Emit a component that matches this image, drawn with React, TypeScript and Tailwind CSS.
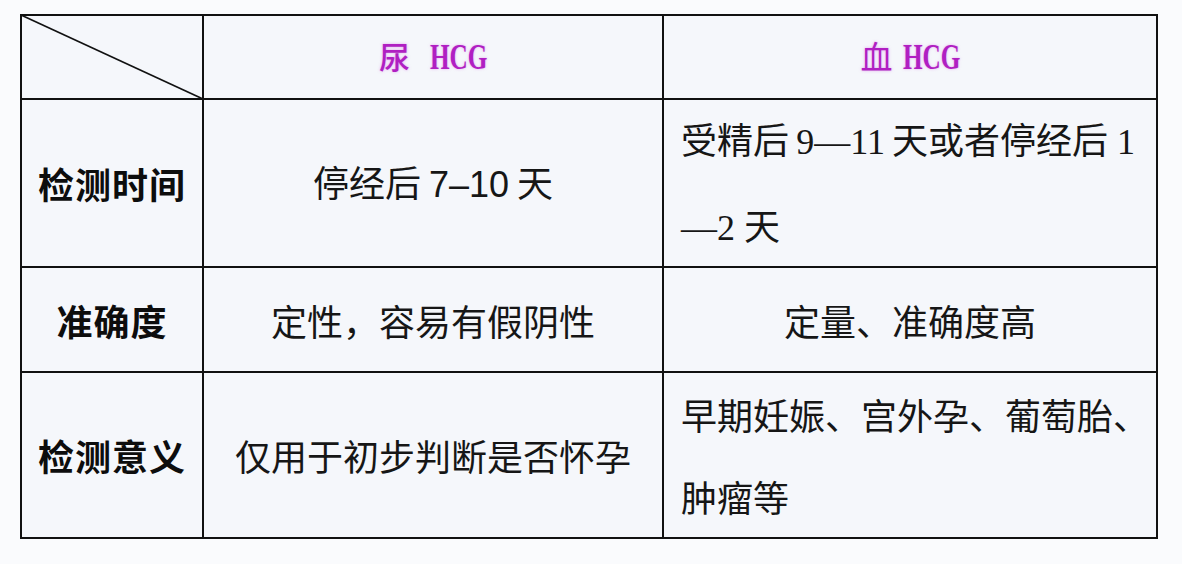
export default function App() {
  const cell = "bg-[#f5f7fb] flex items-center justify-center";
  const cjk = "font-['Noto_Sans_CJK_SC',sans-serif]";
  const serif = "font-['Liberation_Serif','Noto_Sans_CJK_SC',serif]";
  const sans = "font-['Liberation_Sans','Noto_Sans_CJK_SC',sans-serif]";
  const label = `${cjk} text-[36px] font-bold text-[#0d0d0d] tracking-[1px]`;
  const body = `${cjk} text-[36px] text-[#161616] whitespace-nowrap`;
  const hcg = (
    <span className="inline-block w-[57px] whitespace-nowrap">
      <span className={`inline-block origin-left scale-x-[0.7] ${serif} text-[36px] font-bold`}>HCG</span>
    </span>
  );
  return (
    <div className="w-[1182px] h-[564px] bg-[#fafbfd] pt-[14px] pl-[20px]">
      <div className="grid w-fit grid-cols-[180px_458px_492px] grid-rows-[82px_166px_103px_164px] gap-[2px] bg-[#111] p-[2px]">
        <div className="relative bg-[#f5f7fb]">
          <svg className="absolute inset-0 overflow-visible" width="180" height="82">
            <line x1="-1" y1="-1" x2="181" y2="83" stroke="#111" strokeWidth="1.7" />
          </svg>
        </div>
        <div className={cell}>
          <div className="whitespace-nowrap text-[#b01fc2] [text-shadow:0_0_3px_rgba(210,80,230,0.5)]">
            <span className={`${cjk} text-[31px] font-medium`}>尿</span>
            <span className="ml-[20px]">{hcg}</span>
          </div>
        </div>
        <div className={cell}>
          <div className="whitespace-nowrap text-[#b01fc2] [text-shadow:0_0_3px_rgba(210,80,230,0.5)]">
            <span className={`${cjk} text-[32px]`}>血</span>
            <span className="ml-[10px]">{hcg}</span>
          </div>
        </div>

        <div className={cell}>
          <span className={label}>检测时间</span>
        </div>
        <div className={cell}>
          <span className={body}>
            停经后 <span className={sans}>7–10</span> 天
          </span>
        </div>
        <div className="bg-[#f5f7fb] flex flex-col justify-center pl-[17px]">
          <div className={`${body} leading-[82px]`}>
            受精后<span className={serif}>&thinsp;9—11&thinsp;</span>天或者停经后<span className={serif}> 1</span>
          </div>
          <div className={`${body} leading-[82px]`}>
            <span className={serif}>—2 </span>天
          </div>
        </div>

        <div className={cell}>
          <span className={label}>准确度</span>
        </div>
        <div className={cell}>
          <span className={body}>定性，容易有假阴性</span>
        </div>
        <div className={cell}>
          <span className={body}>定量、准确度高</span>
        </div>

        <div className={cell}>
          <span className={label}>检测意义</span>
        </div>
        <div className={cell}>
          <span className={body}>仅用于初步判断是否怀孕</span>
        </div>
        <div className="bg-[#f5f7fb] flex flex-col justify-center pl-[17px]">
          <div className={`${body} leading-[82px]`}>早期妊娠、宫外孕、葡萄胎、</div>
          <div className={`${body} leading-[82px]`}>肿瘤等</div>
        </div>
      </div>
    </div>
  );
}
